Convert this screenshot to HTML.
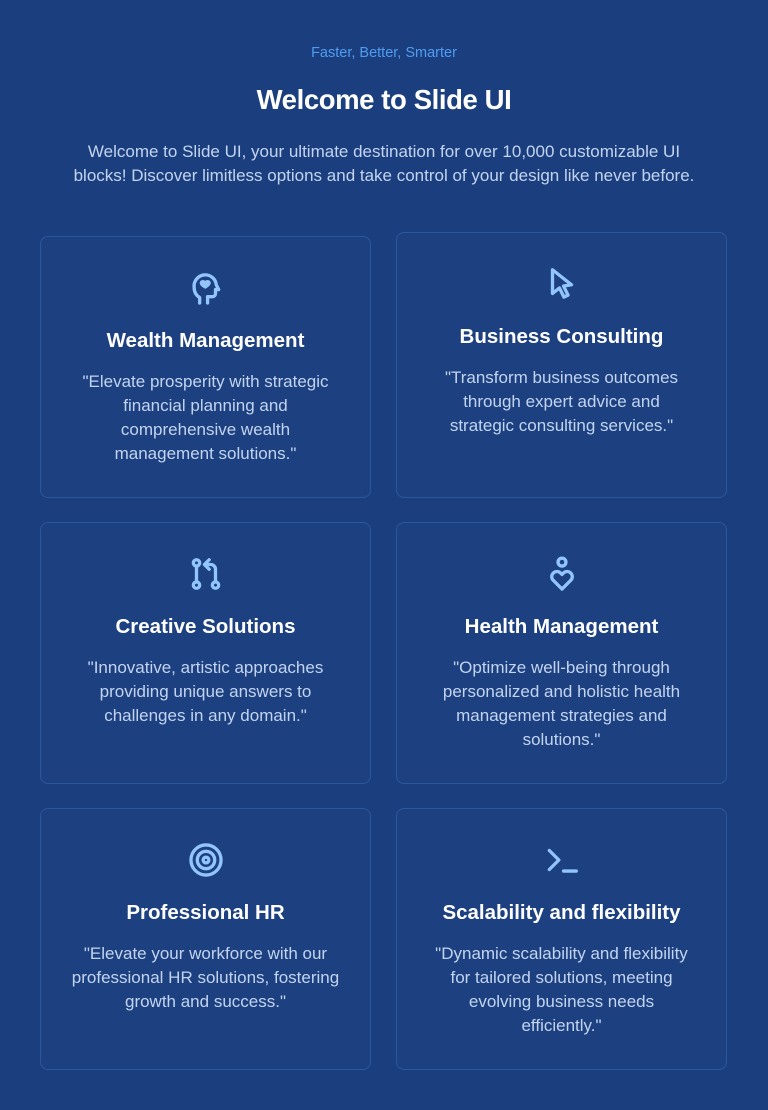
<!DOCTYPE html>
<html><head><meta charset="utf-8"><style>
*{margin:0;padding:0;box-sizing:border-box}
html,body{width:768px;height:1110px;background:#1b3f7e;font-family:"Liberation Sans",sans-serif;overflow:hidden;position:relative}
.sub{position:absolute;top:45px;width:100%;text-align:center;font-size:14.5px;color:#4f9cf0}
h1{position:absolute;top:84px;width:100%;text-align:center;font-size:27.5px;font-weight:bold;color:#fff;letter-spacing:-0.4px}
.intro{position:absolute;top:140px;left:0;width:768px;text-align:center;font-size:17px;line-height:24px;color:#c3d4f0;white-space:nowrap}
.card{position:absolute;width:331px;border:1px solid #2c569e;border-radius:8px;background:#1c4080;text-align:center;padding:32px 10px 0}
.card svg{display:block;margin:0 auto;width:38px;height:38px;fill:none;stroke:#93c5fd;stroke-width:2.1;stroke-linecap:round;stroke-linejoin:round}
.card h3{margin-top:20px;font-size:20.5px;line-height:28px;font-weight:bold;color:#fff;white-space:nowrap}
.card p{margin-top:15px;font-size:17px;line-height:24px;color:#c3d4f0;white-space:nowrap}
</style></head><body>
<div class="sub">Faster, Better, Smarter</div>
<h1>Welcome to Slide UI</h1>
<div class="intro">Welcome to Slide UI, your ultimate destination for over 10,000 customizable UI<br>blocks! Discover limitless options and take control of your design like never before.</div>

<div class="card" style="left:40px;top:236px;height:262px">
<svg viewBox="0 0 24 24"><path d="M8 21.5v-3.5C5.6 16.6 4.5 14.2 4.5 11.5A7 7 0 0 1 18.5 10l1.5 3h-2v2.5a2 2 0 0 1-2 2h-3v4"/><path d="M11.5 8.2c-.9-1.2-3-.9-3 .7 0 1.3 3 3.1 3 3.1s3-1.8 3-3.1c0-1.6-2.1-1.9-3-.7z" fill="#93c5fd" stroke-width="1"/></svg>
<h3>Wealth Management</h3>
<p>"Elevate prosperity with strategic<br>financial planning and<br>comprehensive wealth<br>management solutions."</p></div>

<div class="card" style="left:396px;top:232px;height:266px">
<svg viewBox="0 0 24 24"><path d="M6 3l12 9.5-5 .8 2.8 5.7-2.6 1.3-2.8-5.8L6 18z"/></svg>
<h3>Business Consulting</h3>
<p>"Transform business outcomes<br>through expert advice and<br>strategic consulting services."</p></div>

<div class="card" style="left:40px;top:522px;height:262px">
<svg viewBox="0 0 24 24"><circle cx="6" cy="5" r="2"/><circle cx="6" cy="19" r="2"/><circle cx="18" cy="19" r="2"/><path d="M6 7v10M18 17V9a3 3 0 0 0-3-3h-3M14 3l-3 3 3 3"/></svg>
<h3>Creative Solutions</h3>
<p>"Innovative, artistic approaches<br>providing unique answers to<br>challenges in any domain."</p></div>

<div class="card" style="left:396px;top:522px;height:262px">
<svg viewBox="0 0 24 24"><circle cx="12" cy="4.5" r="2.5"/><path d="M12 21.5l-5.5-5.5a3.2 3.2 0 0 1 0-4.6 3.2 3.2 0 0 1 4.6 0l.9.9.9-.9a3.2 3.2 0 0 1 4.6 0 3.2 3.2 0 0 1 0 4.6z"/></svg>
<h3>Health Management</h3>
<p>"Optimize well-being through<br>personalized and holistic health<br>management strategies and<br>solutions."</p></div>

<div class="card" style="left:40px;top:808px;height:262px">
<svg viewBox="0 0 24 24"><circle cx="12" cy="12" r="9.5"/><circle cx="12" cy="12" r="5.5"/><circle cx="12" cy="12" r="1.8"/></svg>
<h3>Professional HR</h3>
<p>"Elevate your workforce with our<br>professional HR solutions, fostering<br>growth and success."</p></div>

<div class="card" style="left:396px;top:808px;height:262px">
<svg viewBox="0 0 24 24"><path d="M4 6l6 6-6 6M13 19h8"/></svg>
<h3>Scalability and flexibility</h3>
<p>"Dynamic scalability and flexibility<br>for tailored solutions, meeting<br>evolving business needs<br>efficiently."</p></div>
</body></html>
